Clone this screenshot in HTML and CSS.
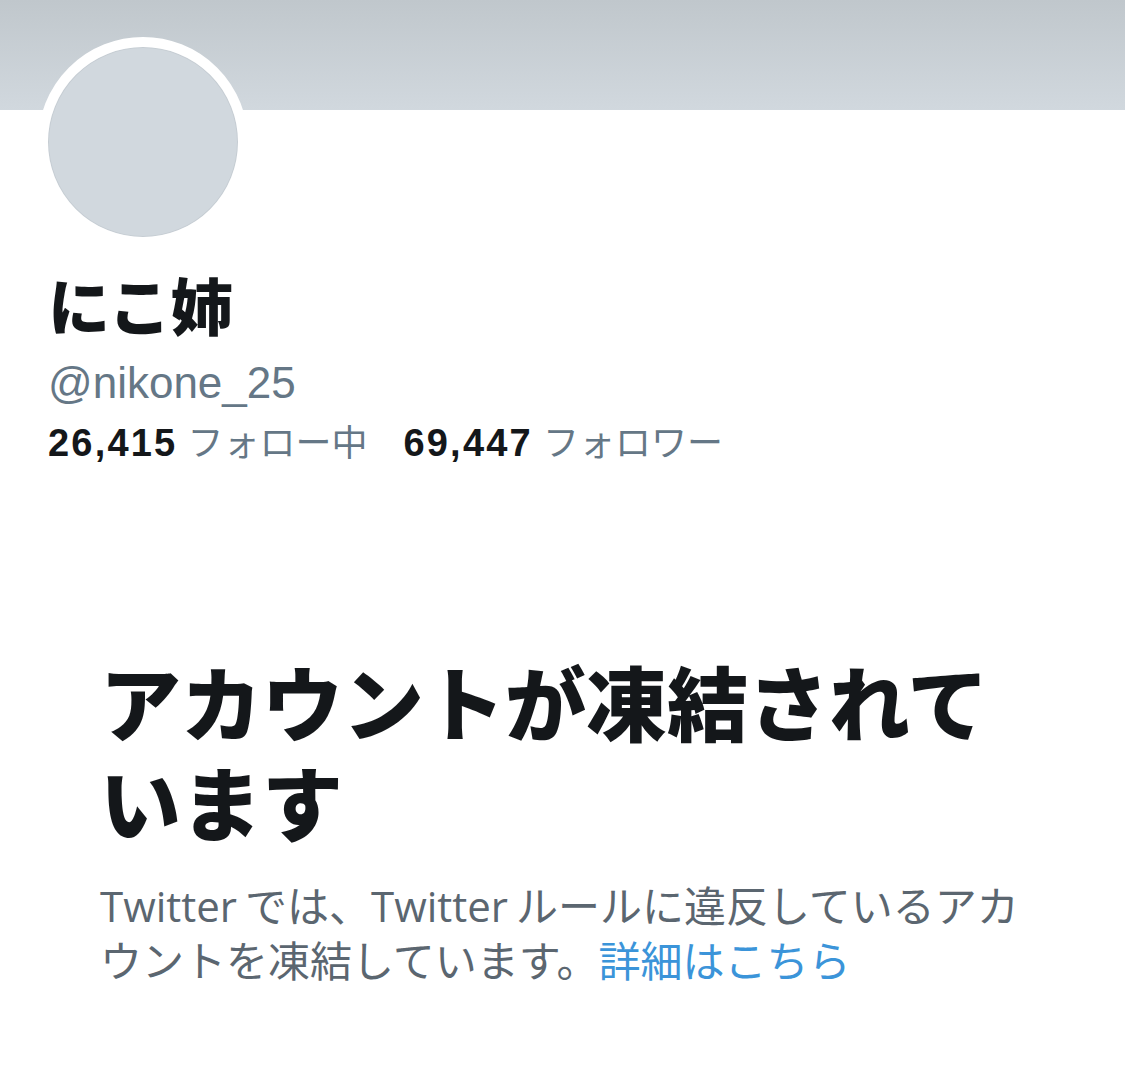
FILE: index.html
```html
<!DOCTYPE html>
<html lang="ja">
<head>
  <meta charset="UTF-8">
  <title>にこ姉 (@nikone_25)</title>
  <link rel="stylesheet" href="styles.css">
</head>
<body>

<div class="banner"></div>

<div class="profile">
  <div class="avatar"></div>
  <h1 class="name">にこ姉</h1>
  <div class="handle">@nikone_25</div>
  <div class="stats">
    <span class="stat"><b>26,415</b> フォロー中</span>
    <span class="stat"><b>69,447</b> フォロワー</span>
  </div>
</div>

<div class="suspended">
  <h2>アカウントが凍結されています</h2>
  <p><span class="en">Twitter</span>では、<span class="en">Twitter</span>ルールに違反しているアカウントを凍結しています。<a href="#">詳細はこちら</a></p>
</div>

</body>
</html>
```

FILE: styles.css
```css
body {
  margin: 0;
  background: #fff;
  color: #14171a;
  font-family: "Liberation Sans", "Noto Sans CJK JP", sans-serif;
}

.banner {
  height: 110px;
  background: linear-gradient(#c0c7cc, #d1d8de);
}

.profile {
  padding: 0 48px;
}

.avatar {
  width: 190px;
  height: 190px;
  margin: -73px 0 0 -10px;
  border: 10px solid #fff;
  border-radius: 50%;
  background: #d1d8de;
  box-shadow: inset 0 0 0 1px #c6cdd3;
}

.name {
  margin: 28px 0 0;
  font-size: 62px;
  font-weight: 900;
  line-height: 70px;
}

.handle {
  margin-top: 12px;
  font-size: 44px;
  line-height: 52px;
  color: #657786;
}

.stats {
  margin-top: 12px;
  font-size: 36px;
  line-height: 44px;
  color: #657786;
  display: flex;
  gap: 36px;
}

.stats b {
  font-size: 38px;
  letter-spacing: 2.2px;
  color: #14171a;
}

.suspended {
  width: 925px;
  padding: 191px 0 0 100px;
}

.suspended h2 {
  margin: 0;
  font-size: 81px;
  font-weight: 900;
  line-height: 100px;
}

.suspended p {
  margin: 21px 0 0;
  font-size: 42px;
  line-height: 55px;
  color: #5b6670;
}

.suspended .en {
  font-family: "Open Sans", "Liberation Sans", sans-serif;
  margin-right: 8px;
}

.suspended a {
  color: #3b94d9;
  text-decoration: none;
}
```
